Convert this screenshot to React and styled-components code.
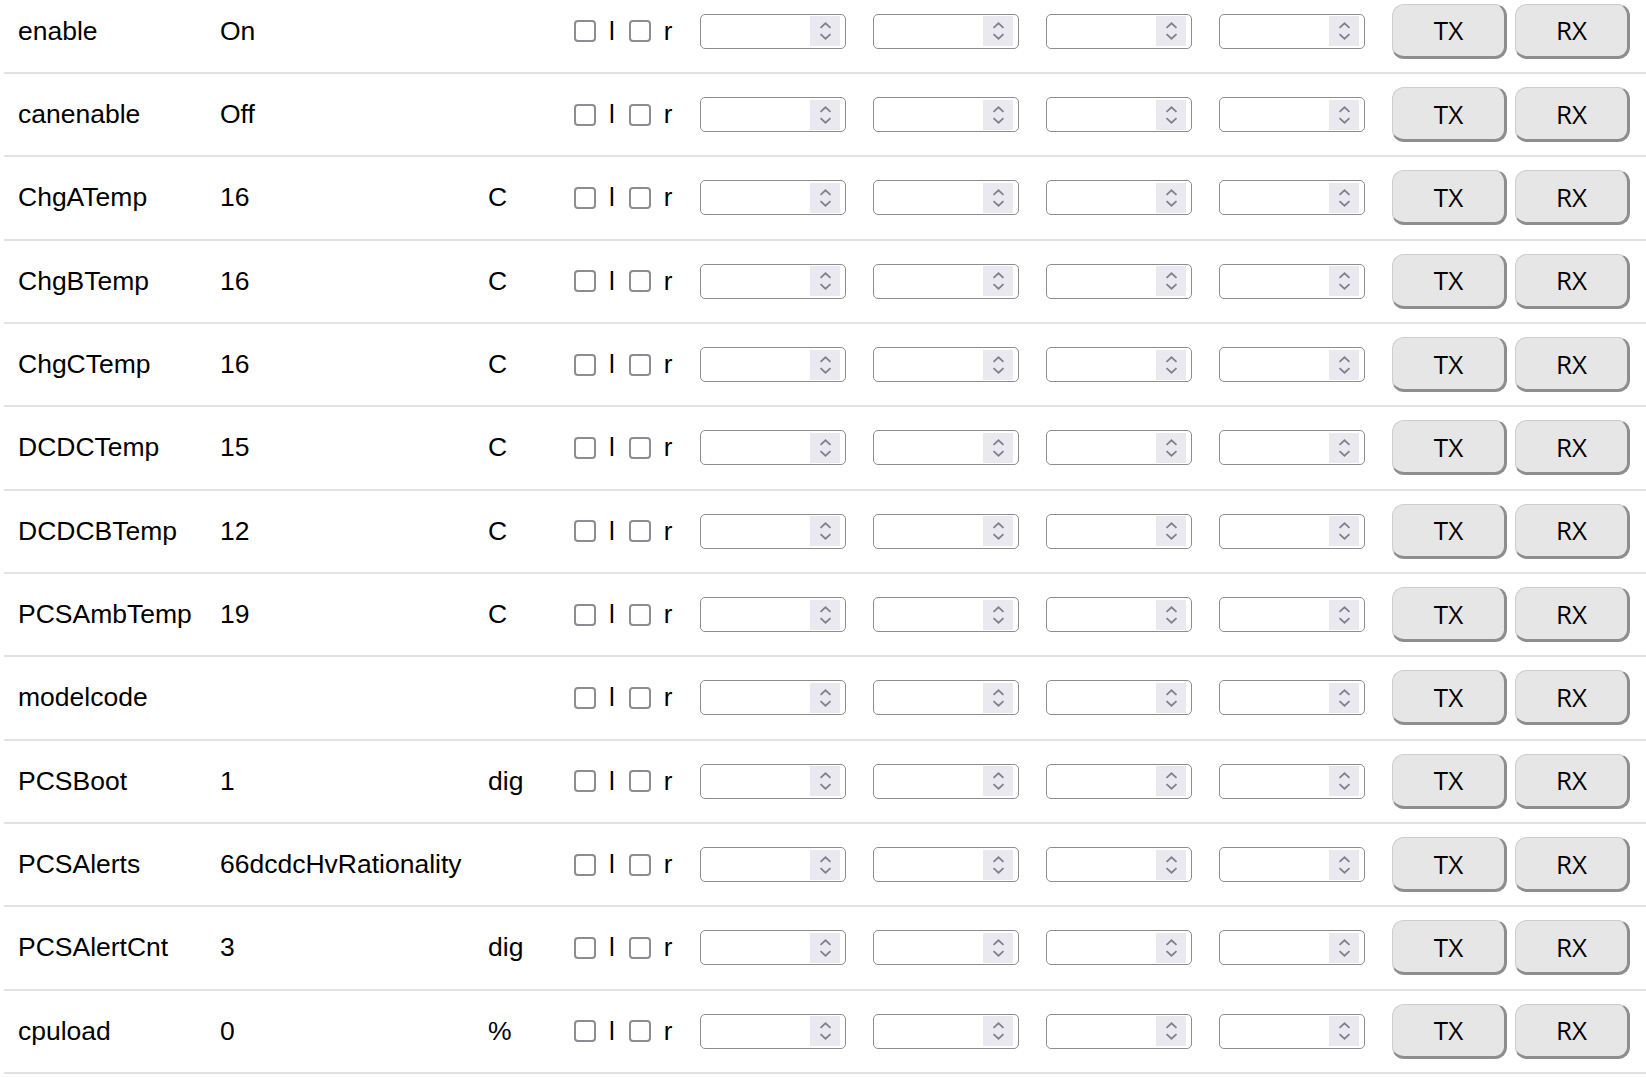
import styled, { createGlobalStyle } from "styled-components";

const GlobalStyle = createGlobalStyle`
  html, body {
    margin: 0;
    padding: 0;
    background: #fff;
    overflow: hidden;
  }
  body {
    font-family: "Liberation Sans", Arial, sans-serif;
    color: #000;
  }
`;

const signals = [
  ["enable", "On", ""],
  ["canenable", "Off", ""],
  ["ChgATemp", "16", "C"],
  ["ChgBTemp", "16", "C"],
  ["ChgCTemp", "16", "C"],
  ["DCDCTemp", "15", "C"],
  ["DCDCBTemp", "12", "C"],
  ["PCSAmbTemp", "19", "C"],
  ["modelcode", "", ""],
  ["PCSBoot", "1", "dig"],
  ["PCSAlerts", "66dcdcHvRationality", ""],
  ["PCSAlertCnt", "3", "dig"],
  ["cpuload", "0", "%"],
];

const Spin = () => (
  <svg width="13" height="20" viewBox="0 0 13 20" fill="none">
    <path d="M1.5 6.8 L6.5 2.3 L11.5 6.8" stroke="#808088" strokeWidth="1.8" />
    <path d="M1.5 13.2 L6.5 17.7 L11.5 13.2" stroke="#808088" strokeWidth="1.8" />
  </svg>
);

const NumberBox = () => (
  <NumberField>
    <NumberInput type="text" />
    <Spinner>
      <Spin />
    </Spinner>
  </NumberField>
);

const App = () => {
  return (
    <>
      <GlobalStyle />
      <Table>
        {signals.map(([name, value, unit]) => (
          <Row key={name}>
            <Cell>{name}</Cell>
            <Cell>{value}</Cell>
            <Cell>{unit}</Cell>
            <Flags>
              <FlagLabel>
                <Check type="checkbox" />l
              </FlagLabel>
              <FlagLabel>
                <Check type="checkbox" />r
              </FlagLabel>
            </Flags>
            <InputCell><NumberBox /></InputCell>
            <InputCell><NumberBox /></InputCell>
            <InputCell><NumberBox /></InputCell>
            <InputCell><NumberBox /></InputCell>
            <ButtonCell><ActionButton>TX</ActionButton></ButtonCell>
            <ButtonCell><ActionButton>RX</ActionButton></ButtonCell>
          </Row>
        ))}
      </Table>
    </>
  );
};

export default App;

const Table = styled.div`
  margin-top: -9.33px;
  padding-left: 4px;
  width: 1680px;
`;

const Row = styled.div`
  display: grid;
  grid-template-columns: 202px 268px 86px 126px 173px 173px 173px 173px 123px 123px;
  align-items: center;
  box-sizing: border-box;
  height: 83.333px;
  padding-left: 14px;
  border-bottom: 2px solid #e2e2e2;
`;

const Cell = styled.div`
  font-size: 26.5px;
  white-space: nowrap;
`;

const Flags = styled.div`
  display: flex;
  align-items: center;
  font-size: 26px;
  gap: 14px;
`;

const FlagLabel = styled.label`
  display: flex;
  align-items: center;
  gap: 13px;
`;

const Check = styled.input`
  appearance: none;
  margin: 0;
  width: 22px;
  height: 22px;
  box-sizing: border-box;
  border: 2.5px solid #8c8c93;
  border-radius: 4px;
  background: #fff;
`;

const InputCell = styled.div`
  display: flex;
  align-items: center;
`;

const NumberField = styled.div`
  display: flex;
  align-items: center;
  box-sizing: border-box;
  width: 146px;
  height: 35px;
  border: 1.5px solid #8d8d8d;
  border-radius: 5px;
  padding: 0 5px 0 2px;
  background: #fff;
`;

const NumberInput = styled.input`
  flex: 1;
  min-width: 0;
  border: none;
  outline: none;
  background: transparent;
  font-size: 20px;
  font-family: inherit;
`;

const Spinner = styled.span`
  display: flex;
  align-items: center;
  justify-content: center;
  width: 30px;
  height: 30px;
  background: #e9e9ef;
`;

const ButtonCell = styled.div`
  display: flex;
  align-items: center;
`;

const ActionButton = styled.button`
  width: 115px;
  height: 55px;
  box-sizing: border-box;
  margin: 0;
  padding: 0;
  border-style: solid;
  border-width: 1px 3px 3px 1px;
  border-color: #cdcdcd #8e8e8e #8e8e8e #cdcdcd;
  border-radius: 12px;
  background: #e6e6e6;
  color: #000;
  font-family: "Open Sans", "Noto Sans", sans-serif;
  font-size: 26px;
  line-height: 1;
  cursor: pointer;
`;
